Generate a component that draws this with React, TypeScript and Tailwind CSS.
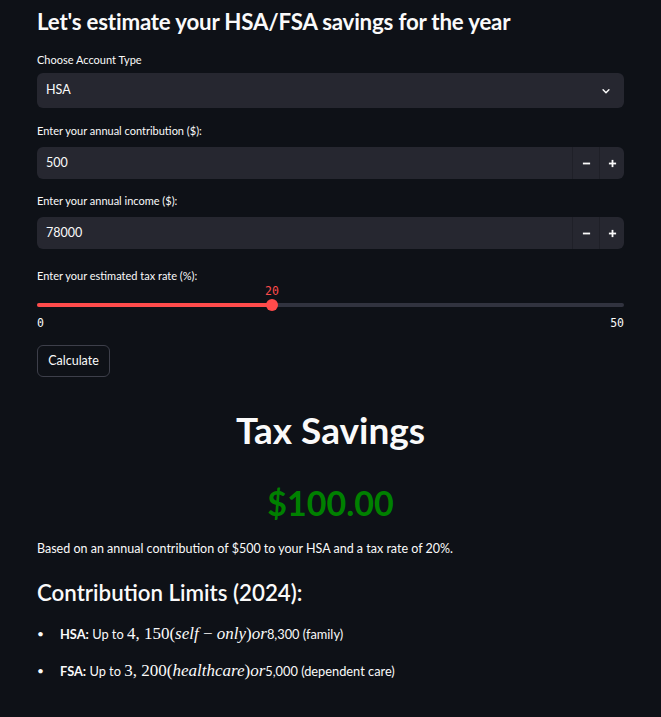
import React from "react";

const sans = { fontFamily: "Lato, 'Noto Sans', sans-serif" };
const mono = { fontFamily: "'DejaVu Sans Mono', 'Liberation Mono', monospace" };
const math = { fontFamily: "'Liberation Serif', 'DejaVu Serif', serif" };

function NumberInput({ value }: { value: string }) {
  return (
    <div className="flex h-[32px] w-full items-stretch rounded-md bg-[#262730]">
      <div className="flex flex-1 items-center pl-[9px] text-[12.5px] text-[#fafafa]">{value}</div>
      <div className="flex w-[27px] items-center justify-center border-l border-[#1f2028] text-[#fafafa]">
        <svg width="9" height="9" viewBox="0 0 10 10"><rect x="1" y="4" width="8" height="2" fill="#fafafa" /></svg>
      </div>
      <div className="flex w-[25px] items-center justify-center border-l border-[#1f2028] text-[#fafafa]">
        <svg width="9" height="9" viewBox="0 0 10 10"><rect x="1" y="4" width="8" height="2" fill="#fafafa" /><rect x="4" y="1" width="2" height="8" fill="#fafafa" /></svg>
      </div>
    </div>
  );
}

export default function App() {
  return (
    <div className="min-h-[717px] w-full bg-[#0e1117] text-[#fafafa]" style={sans}>
      <div className="flex flex-col px-[37px] pt-[6px]">
        <h3 className="h-[32px] text-[22.3px] font-bold leading-[32px] tracking-[-0.2px]">Let's estimate your HSA/FSA savings for the year</h3>

        <div className="mt-[14px] h-[16px] text-[11px] leading-[16px]">Choose Account Type</div>
        <div className="mt-[5px] flex h-[35px] items-center justify-between rounded-md bg-[#262730] pl-[9px] pr-[13px]">
          <span className="text-[12.5px]">HSA</span>
          <svg width="10" height="10" viewBox="0 0 24 24" fill="none" stroke="#fafafa" strokeWidth="3.5" strokeLinecap="round" strokeLinejoin="round"><path d="M5 9l7 7 7-7" /></svg>
        </div>

        <div className="mt-[15px] h-[16px] text-[11px] leading-[16px]">Enter your annual contribution ($):</div>
        <div className="mt-[8px]"><NumberInput value="500" /></div>

        <div className="mt-[14px] h-[16px] text-[11px] leading-[16px]">Enter your annual income ($):</div>
        <div className="mt-[8px]"><NumberInput value="78000" /></div>

        <div className="mt-[19px] h-[16px] text-[11px] leading-[16px]">Enter your estimated tax rate (%):</div>
        <div className="relative h-[61px]">
          <div className="absolute left-[235px] top-0 w-0">
            <span className="absolute -translate-x-1/2 text-[11.5px] leading-[14px] text-[#ff4b4b]" style={mono}>20</span>
          </div>
          <div className="absolute left-0 right-0 top-[19px] h-[4px] rounded-full bg-[#31333f]" />
          <div className="absolute left-0 top-[19px] h-[4px] w-[235px] rounded-full bg-[#ff4b4b]" />
          <div className="absolute left-[229px] top-[15px] h-[12px] w-[12px] rounded-full bg-[#ff4b4b]" />
          <span className="absolute left-0 top-[32px] text-[11.5px] leading-[14px]" style={mono}>0</span>
          <span className="absolute right-0 top-[32px] text-[11.5px] leading-[14px]" style={mono}>50</span>
        </div>

        <button className="flex h-[32px] w-[73px] items-center justify-center rounded-md border border-[#3d3f4a] bg-[#0e1117] text-[12.5px]">Calculate</button>

        <h2 className="mt-[31px] h-[44px] text-center text-[37px] font-bold leading-[44px]">Tax Savings</h2>
        <div className="mt-[29px] h-[44px] text-center text-[34px] font-bold leading-[44px] text-[#008000]">$100.00</div>
        <p className="mt-[15px] h-[18px] text-[12.5px] leading-[18px]">Based on an annual contribution of $500 to your HSA and a tax rate of 20%.</p>

        <h3 className="mt-[20px] h-[30px] text-[22.3px] font-semibold leading-[30px]">Contribution Limits (2024):</h3>

        <ul className="mt-[15px] flex flex-col gap-[15px] text-[12.8px]">
          <li className="flex h-[22px] items-center">
            <span className="w-[23px] text-[12px]">•</span>
            <span><b className="font-bold">HSA:</b> Up to <span className="text-[17px]" style={math}>4, 150(<i>self</i> − <i>only</i>)<i>or</i></span>8,300 (family)</span>
          </li>
          <li className="flex h-[22px] items-center">
            <span className="w-[23px] text-[12px]">•</span>
            <span><b className="font-bold">FSA:</b> Up to <span className="text-[17px]" style={math}>3, 200(<i>healthcare</i>)<i>or</i></span>5,000 (dependent care)</span>
          </li>
        </ul>
      </div>
    </div>
  );
}
